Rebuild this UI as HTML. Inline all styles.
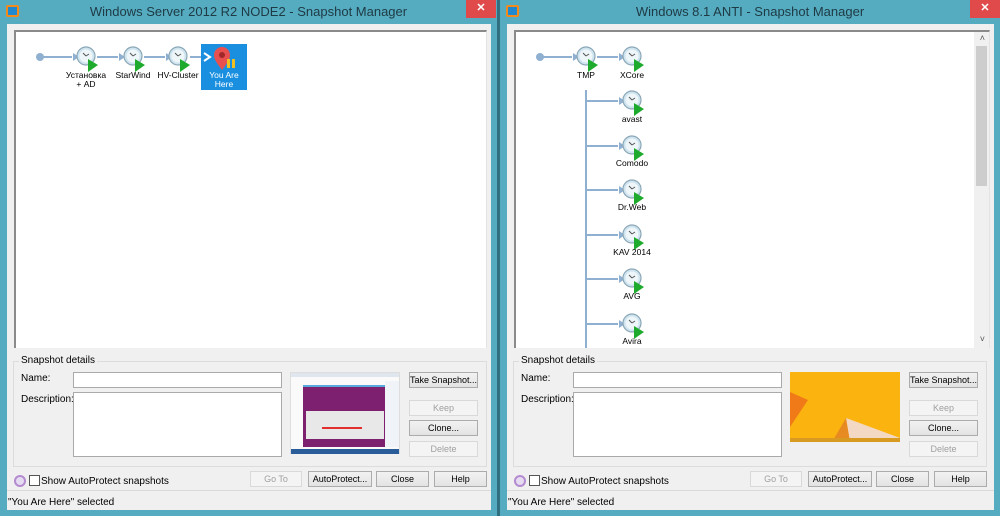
<!DOCTYPE html>
<html><head><meta charset="utf-8"><style>
*{margin:0;padding:0;box-sizing:border-box}
body{width:1000px;height:516px;overflow:hidden;background:#3f8da0;font-family:"Liberation Sans",sans-serif;font-size:10px;color:#000;position:relative}
.win{position:absolute;top:0;width:497px;height:516px;background:#55abc0}
.title{position:absolute;top:0;left:0;right:0;height:24px;text-align:center;line-height:24px;font-size:13px;color:#1e3a44}
.ico{position:absolute;left:6px;top:5px;width:13px;height:12px;background:#1e88d0;border:2px solid #f28a1c;border-radius:2px}
.x{position:absolute;top:0;width:30px;height:18px;background:#e04a4a;color:#fff;text-align:center;line-height:17px;font-size:11px;font-weight:bold}
.client{position:absolute;left:7px;top:24px;width:484px;height:486px;background:#f0f0f0;white-space:nowrap}
.tree{position:absolute;left:7px;top:6px;width:473px;height:318px;background:#fff;border-top:2px solid #8a8a8a;border-left:2px solid #8a8a8a;border-right:1px solid #e3e3e3;overflow:hidden}
.grp{position:absolute;left:6px;top:337px;width:474px;height:106px;border:1px solid #dcdcdc}
.grp .lg{position:absolute;left:5px;top:-7px;background:#f0f0f0;padding:0 2px}
.lbl{position:absolute}
.inp{position:absolute;background:#fff;border:1px solid #aaa}
.btn{position:absolute;height:16px;border:1px solid #acacac;background:linear-gradient(#f2f2f2,#e3e3e3);text-align:center;line-height:14px;font-size:9px;white-space:nowrap;overflow:hidden}
.dis{color:#a0a0a0;background:#f4f4f4;border-color:#d9d9d9}
.status{position:absolute;left:1px;top:473px;font-size:10px}
.sep{position:absolute;left:0;right:0;top:466px;border-top:1px solid #dadada}
.cb{position:absolute;width:11px;height:11px;border:1px solid #555;background:#fff}
.ap{position:absolute;width:12px;height:12px;border-radius:50%;border:2px solid #b48ad0;background:#e6dcf2}
.nl{position:absolute;font-size:8.5px;text-align:center;width:60px;line-height:9px}
svg{position:absolute;left:0;top:0}
</style></head><body>

<svg width="0" height="0" style="position:absolute"><defs>
<g id="clk"><circle cx="0" cy="0" r="9" fill="#cfe4ee" stroke="#8aa6b6" stroke-width="1.2"/><circle cx="0" cy="0" r="6.5" fill="#eef6fa"/><path d="M0 0 L-3 -3 M0 0 L3 -2" stroke="#555" stroke-width="1"/><path d="M2 3 L12 9 L2 16 Z" fill="#1eaa2c"/></g>
</defs></svg>

<!-- LEFT WINDOW -->
<div class="win" style="left:0">
 <div class="ico"></div>
 <div class="title">Windows Server 2012 R2 NODE2 - Snapshot Manager</div>
 <div class="x" style="left:466px">✕</div>
 <div class="client">
  <div class="tree">
   <svg width="480" height="360" style="left:-16px;top:-32px">
    <g stroke="#8fb0d0" stroke-width="2" fill="none">
     <path d="M40 57 H72"/><path d="M97 57 H118"/><path d="M144 57 H165"/><path d="M190 57 H211"/>
    </g>
    <g fill="#8fb0d0"><path d="M73 53 L79 57 L73 61Z"/><path d="M119 53 L125 57 L119 61Z"/><path d="M166 53 L172 57 L166 61Z"/></g>
    <circle cx="40" cy="57" r="4" fill="#8fb0d0"/>
    <use href="#clk" x="86" y="56"/><use href="#clk" x="133" y="56"/><use href="#clk" x="178" y="56"/>
    <rect x="201" y="44" width="46" height="46" fill="#1a8fe0"/>
    <path d="M204 53 L210 57 L204 61" stroke="#fff" stroke-width="2" fill="none"/>
    <path d="M222 70 C216 62 214 59 214 55 A8 8 0 0 1 230 55 C230 59 228 62 222 70Z" fill="#e85050"/>
    <circle cx="222" cy="55" r="3" fill="#a02828"/>
    <rect x="227" y="59" width="3" height="9" fill="#f0c020"/><rect x="232" y="59" width="3" height="9" fill="#f0c020"/>
   </svg>
   <div class="nl" style="left:40px;top:39px">Установка<br>+ AD</div>
   <div class="nl" style="left:87px;top:39px">StarWind</div>
   <div class="nl" style="left:132px;top:39px">HV-Cluster</div>
   <div class="nl" style="left:178px;top:39px;color:#fff">You Are<br>Here</div>
  </div>
  <div class="grp"><span class="lg">Snapshot details</span></div>
  <div class="lbl" style="left:14px;top:349px">Name:</div>
  <div class="lbl" style="left:14px;top:370px">Description:</div>
  <div class="inp" style="left:66px;top:348px;width:209px;height:16px"></div>
  <div class="inp" style="left:66px;top:368px;width:209px;height:65px"></div>
  <div style="position:absolute;left:283px;top:348px;width:110px;height:82px;background:#fafafa;border:1px solid #ddd">
   <div style="position:absolute;left:0;top:0;width:108px;height:4px;background:#dfe6ee"></div>
   <div style="position:absolute;left:12px;top:12px;width:82px;height:62px;background:#7d2070;border-top:2px solid #58a8e0"></div>
   <div style="position:absolute;left:15px;top:38px;width:78px;height:28px;background:#e8e8e8"></div>
   <div style="position:absolute;left:31px;top:54px;width:40px;height:2px;background:#e03030"></div>
   <div style="position:absolute;left:94px;top:8px;width:14px;height:66px;background:#f0f4f8"></div>
   <div style="position:absolute;left:0;top:76px;width:108px;height:5px;background:#2b5c9a"></div>
  </div>
  <div class="btn" style="left:402px;top:348px;width:69px">Take Snapshot...</div>
  <div class="btn dis" style="left:402px;top:376px;width:69px">Keep</div>
  <div class="btn" style="left:402px;top:396px;width:69px">Clone...</div>
  <div class="btn dis" style="left:402px;top:417px;width:69px">Delete</div>
  <div class="ap" style="left:7px;top:451px"></div>
  <div class="cb" style="left:22px;top:451px"></div>
  <div class="lbl" style="left:34px;top:452px">Show AutoProtect snapshots</div>
  <div class="btn dis" style="left:243px;top:447px;width:52px">Go To</div>
  <div class="btn" style="left:301px;top:447px;width:64px">AutoProtect...</div>
  <div class="btn" style="left:369px;top:447px;width:53px">Close</div>
  <div class="btn" style="left:427px;top:447px;width:53px">Help</div>
  <div class="sep"></div>
  <div class="status">"You Are Here" selected</div>
 </div>
</div>
<div style="position:absolute;left:497px;top:0;width:3px;height:516px;background:#2f6f80"></div>

<!-- RIGHT WINDOW -->
<div class="win" style="left:500px;width:500px">
 <div class="ico"></div>
 <div class="title">Windows 8.1 ANTI - Snapshot Manager</div>
 <div class="x" style="left:470px">✕</div>
 <div class="client" style="width:487px">
  <div class="tree" style="width:476px">
   <svg width="480" height="360" style="left:-16px;top:-32px">
    <g stroke="#8fb0d0" stroke-width="2" fill="none">
     <path d="M40 57 H72"/><path d="M97 57 H118"/><path d="M86 90 V348"/>
     <path d="M86 101 H118"/><path d="M86 146 H118"/><path d="M86 190 H118"/><path d="M86 235 H118"/><path d="M86 279 H118"/><path d="M86 324 H118"/>
    </g>
    <g fill="#8fb0d0"><path d="M73 53 L79 57 L73 61Z"/><path d="M119 53 L125 57 L119 61Z"/>
     <path d="M119 97 L125 101 L119 105Z"/><path d="M119 142 L125 146 L119 150Z"/><path d="M119 186 L125 190 L119 194Z"/><path d="M119 231 L125 235 L119 239Z"/><path d="M119 275 L125 279 L119 283Z"/><path d="M119 320 L125 324 L119 328Z"/></g>
    <circle cx="40" cy="57" r="4" fill="#8fb0d0"/>
    <use href="#clk" x="86" y="56"/><use href="#clk" x="132" y="56"/>
    <use href="#clk" x="132" y="100"/><use href="#clk" x="132" y="145"/><use href="#clk" x="132" y="189"/><use href="#clk" x="132" y="234"/><use href="#clk" x="132" y="278"/><use href="#clk" x="132" y="323"/>
   </svg>
   <div class="nl" style="left:40px;top:39px">TMP</div>
   <div class="nl" style="left:86px;top:39px">XCore</div>
   <div class="nl" style="left:86px;top:83px">avast</div>
   <div class="nl" style="left:86px;top:127px">Comodo</div>
   <div class="nl" style="left:86px;top:171px">Dr.Web</div>
   <div class="nl" style="left:86px;top:216px">KAV 2014</div>
   <div class="nl" style="left:86px;top:260px">AVG</div>
   <div class="nl" style="left:86px;top:305px">Avira</div>
   <div style="position:absolute;right:0;top:0;width:15px;height:316px;background:#f0f0f0"></div>
   <div style="position:absolute;right:2px;top:14px;width:11px;height:140px;background:#cdcdcd"></div>
   <div style="position:absolute;right:4px;top:1px;font-size:9px;color:#555">˄</div>
   <div style="position:absolute;right:4px;top:302px;font-size:9px;color:#555">˅</div>
  </div>
  <div class="grp"><span class="lg">Snapshot details</span></div>
  <div class="lbl" style="left:14px;top:349px">Name:</div>
  <div class="lbl" style="left:14px;top:370px">Description:</div>
  <div class="inp" style="left:66px;top:348px;width:209px;height:16px"></div>
  <div class="inp" style="left:66px;top:368px;width:209px;height:65px"></div>
  <div style="position:absolute;left:283px;top:348px;width:110px;height:70px;background:#fbb40f;overflow:hidden">
   <svg width="110" height="70"><path d="M0 20 L18 28 L0 55Z" fill="#f07a18"/><path d="M56 46 L110 66 L60 70Z" fill="#f3d9c4"/><path d="M56 46 L42 70 L60 70Z" fill="#e88a22"/><rect x="0" y="66" width="110" height="4" fill="#d89a20"/></svg>
  </div>
  <div class="btn" style="left:402px;top:348px;width:69px">Take Snapshot...</div>
  <div class="btn dis" style="left:402px;top:376px;width:69px">Keep</div>
  <div class="btn" style="left:402px;top:396px;width:69px">Clone...</div>
  <div class="btn dis" style="left:402px;top:417px;width:69px">Delete</div>
  <div class="ap" style="left:7px;top:451px"></div>
  <div class="cb" style="left:22px;top:451px"></div>
  <div class="lbl" style="left:34px;top:452px">Show AutoProtect snapshots</div>
  <div class="btn dis" style="left:243px;top:447px;width:52px">Go To</div>
  <div class="btn" style="left:301px;top:447px;width:64px">AutoProtect...</div>
  <div class="btn" style="left:369px;top:447px;width:53px">Close</div>
  <div class="btn" style="left:427px;top:447px;width:53px">Help</div>
  <div class="sep"></div>
  <div class="status">"You Are Here" selected</div>
 </div>
</div>
</body></html>
